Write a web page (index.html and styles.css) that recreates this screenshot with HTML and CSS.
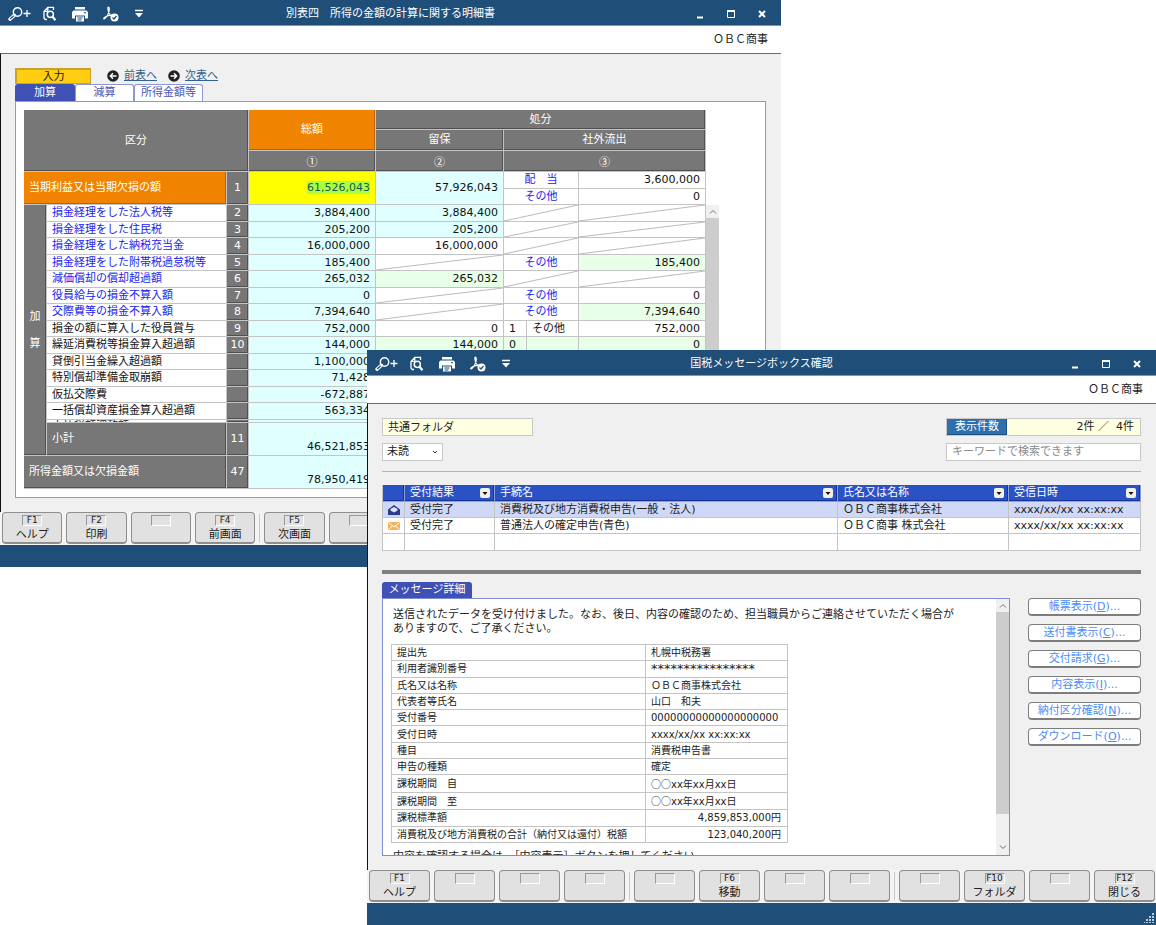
FILE: index.html
```html
<!DOCTYPE html>
<html lang="ja">
<head>
<meta charset="utf-8">
<title>国税メッセージボックス確認</title>
<link rel="stylesheet" href="styles.css">
</head>
<body>
<svg class="sprites" aria-hidden="true">
  <symbol id="i-zoom" viewBox="0 0 23 16">
    <g fill="none" stroke="#fff"><circle cx="9.500" cy="6" r="4.200" stroke-width="1.400"/><path d="M6.300 9.200L2 13.200" stroke-width="3.400" stroke-linecap="round"/><path d="M5.700 9.700L2.200 13" stroke="#1f4e79" stroke-width="1.200"/><path d="M15.500 7.500h7M19 4v7" stroke-width="1.300"/></g>
  </symbol>
  <symbol id="i-preview" viewBox="0 0 14 16">
    <g fill="none" stroke="#fff"><path d="M4 13.500H2.200L1 12V5.500L4.800 1.300H10.500V4M4.800 1.300V5.300H1" stroke-width="1.300"/><circle cx="7.300" cy="8.300" r="3.100" stroke-width="1.500"/><path d="M9.500 10.800L12.500 14.300" stroke-width="2.200"/></g>
  </symbol>
  <symbol id="i-print" viewBox="0 0 16 16">
    <path fill="#fff" d="M3 1h10v2.500H3zM1.500 4.500h13L16 6v6.500h-3V9.500H3v3H0V6z"/><path d="M4 10.500h8V15.500H4z" fill="#fff"/><path d="M5.500 12h5M5.500 14h4" stroke="#1f4e79"/><path d="M12 6.700h2" stroke="#1f4e79"/>
  </symbol>
  <symbol id="i-pdf" viewBox="0 0 16 16">
    <path d="M5.500 1C4.300 1 5 5 6.300 7.500c.9 1.700 2 2.600 3 2.800M5.500 1c1.400.8.900 5-1.200 8.500C3 11.700 1.500 13.300.8 12.800c-.6-.8 2-2.500 4.800-3.200 1.500-.4 3-.5 4-.4" fill="none" stroke="#fff" stroke-width="1.200"/><circle cx="11.500" cy="11.500" r="4" fill="#fff"/><path d="M9.500 11.500l1.500 1.500 2.500-3" fill="none" stroke="#1f4e79" stroke-width="1.200"/>
  </symbol>
  <symbol id="i-more" viewBox="0 0 10 10"><path d="M1 1.500h8" stroke="#fff" stroke-width="1.500"/><path d="M1 4h8L5 8.500z" fill="#fff"/></symbol>
  <symbol id="i-min" viewBox="0 0 10 10"><path d="M2 8.500h6" stroke="#fff" stroke-width="2"/></symbol>
  <symbol id="i-max" viewBox="0 0 10 10"><path d="M1.500 2h7v6.500h-7z" fill="none" stroke="#fff"/><path d="M1 2h8" stroke="#fff" stroke-width="2"/></symbol>
  <symbol id="i-close" viewBox="0 0 10 10"><path d="M2 2l6 6M8 2l-6 6" stroke="#fff" stroke-width="2"/></symbol>
  <symbol id="i-prev" viewBox="0 0 12 12"><circle cx="6" cy="6" r="5.800" fill="#222"/><path d="M9.500 6H3.500M6 3.300L3.300 6 6 8.700" fill="none" stroke="#fff" stroke-width="1.400"/></symbol>
  <symbol id="i-next" viewBox="0 0 12 12"><circle cx="6" cy="6" r="5.800" fill="#222"/><path d="M2.500 6h6M6 3.300L8.700 6 6 8.700" fill="none" stroke="#fff" stroke-width="1.400"/></symbol>
  <symbol id="i-up" viewBox="0 0 8 8"><path d="M1 5.500L4 2.500l3 3" fill="none" stroke="#777"/></symbol>
  <symbol id="i-down" viewBox="0 0 8 8"><path d="M1 2.500l3 3 3-3" fill="none" stroke="#666"/></symbol>
  <symbol id="i-pick" viewBox="0 0 8 8"><path d="M2 3l2 2 2-2" fill="none" stroke="#333"/></symbol>
  <symbol id="i-filter" viewBox="0 0 10 10"><rect width="10" height="10" rx="2" fill="#f3f0e6"/><path d="M2.500 4h5L5 7z" fill="#111"/></symbol>
  <symbol id="i-open" viewBox="0 0 12 12"><path d="M0 5.500L6 1l6 4.500V11H0z" fill="#2b3c90"/><path d="M2.500 5L6 3l3.500 2v1.500L6 8.500 2.500 6.500z" fill="#dfe5fa"/></symbol>
  <symbol id="i-mail" viewBox="0 0 12 12"><path d="M0 2h12v8H0z" fill="#f9b155"/><path d="M.5 2.500L6 7l5.500-4.500M.5 9.500l4-3.500M11.500 9.500l-4-3.500" fill="none" stroke="#fff"/></symbol>
</svg>

<main class="desktop">
<section class="window window-ledger">
  <header class="titlebar">
    <div class="tools">
      <button aria-label="拡大"><svg width="23" height="16"><use href="#i-zoom"/></svg></button>
      <button aria-label="プレビュー"><svg width="14" height="16"><use href="#i-preview"/></svg></button>
      <button aria-label="印刷する"><svg width="16" height="16"><use href="#i-print"/></svg></button>
      <button aria-label="PDF"><svg width="16" height="16"><use href="#i-pdf"/></svg></button>
      <button aria-label="メニュー"><svg width="10" height="10"><use href="#i-more"/></svg></button>
    </div>
    <h1>別表四　所得の金額の計算に関する明細書</h1>
    <div class="controls">
      <button aria-label="最小化"><svg width="10" height="10"><use href="#i-min"/></svg></button>
      <button aria-label="最大化"><svg width="10" height="10"><use href="#i-max"/></svg></button>
      <button aria-label="閉じる"><svg width="10" height="10"><use href="#i-close"/></svg></button>
    </div>
  </header>
  <div class="company">ＯＢＣ商事</div>
  <div class="body">
    <div class="modes">
      <button class="mode">入力</button>
      <svg width="12" height="12"><use href="#i-prev"/></svg><a href="#prev">前表へ</a>
      <svg width="12" height="12"><use href="#i-next"/></svg><a href="#next">次表へ</a>
    </div>
    <nav class="tabs">
      <button class="tab tab-on">加算</button><button class="tab">減算</button><button class="tab tab-wide">所得金額等</button>
    </nav>
    <div class="panel">
      <table class="ledger">
        <colgroup><col class="c-cat"><col class="c-name"><col class="c-no"><col class="c-sum"><col class="c-keep"><col class="c-flag"><col class="c-kind"><col class="c-out"><col class="c-scroll"></colgroup>
        <thead>
          <tr class="h-a"><th colspan="3" rowspan="3">区分</th><th rowspan="2" class="orange">総額</th><th colspan="4">処分</th></tr>
          <tr class="h-b"><th>留保</th><th colspan="3">社外流出</th></tr>
          <tr class="h-b cjk"><th>①</th><th>②</th><th colspan="3">③</th></tr>
        </thead>
        <tbody>
          <tr class="tall"><th colspan="2" rowspan="2" class="orange name">当期利益又は当期欠損の額</th><th rowspan="2">1</th><td rowspan="2" class="focus"><mark>61,526,043</mark></td><td rowspan="2" class="sum">57,926,043</td><td colspan="2" class="kind">配　当</td><td>3,600,000</td></tr>
          <tr><td colspan="2" class="kind">その他</td><td>0</td></tr>
        </tbody>
        <tbody class="rows">
          <tr><th rowspan="15" class="cat">加<br>算</th><td class="item link">損金経理をした法人税等</td><th>2</th><td class="sum">3,884,400</td><td class="sum">3,884,400</td><td colspan="2" class="diag"></td><td class="diag"></td>
            <td rowspan="14" class="bar"><div class="scrollbar"><svg width="8" height="8"><use href="#i-up"/></svg><div class="thumb"></div></div></td></tr>
          <tr><td class="item link">損金経理をした住民税</td><th>3</th><td class="sum">205,200</td><td class="sum">205,200</td><td colspan="2" class="diag"></td><td class="diag"></td></tr>
          <tr><td class="item link">損金経理をした納税充当金</td><th>4</th><td class="sum">16,000,000</td><td>16,000,000</td><td colspan="2" class="diag"></td><td class="diag"></td></tr>
          <tr><td class="item link">損金経理をした附帯税過怠税等</td><th>5</th><td class="sum">185,400</td><td class="diag"></td><td colspan="2" class="kind">その他</td><td class="green">185,400</td></tr>
          <tr><td class="item link">減価償却の償却超過額</td><th>6</th><td class="sum">265,032</td><td class="green">265,032</td><td colspan="2" class="diag"></td><td class="diag"></td></tr>
          <tr><td class="item link">役員給与の損金不算入額</td><th>7</th><td class="sum">0</td><td class="diag"></td><td colspan="2" class="kind">その他</td><td>0</td></tr>
          <tr><td class="item link">交際費等の損金不算入額</td><th>8</th><td class="sum">7,394,640</td><td class="diag"></td><td colspan="2" class="kind">その他</td><td class="green">7,394,640</td></tr>
          <tr><td class="item">損金の額に算入した役員賞与</td><th>9</th><td class="sum">752,000</td><td>0</td><td class="item">1</td><td class="item">その他</td><td>752,000</td></tr>
          <tr><td class="item">繰延消費税等損金算入超過額</td><th>10</th><td class="sum">144,000</td><td class="green">144,000</td><td class="item green">0</td><td class="green"></td><td class="green">0</td></tr>
          <tr><td class="item">貸倒引当金繰入超過額</td><th></th><td class="sum">1,100,000</td><td></td><td></td><td></td><td></td></tr>
          <tr><td class="item">特別償却準備金取崩額</td><th></th><td class="sum">71,428</td><td></td><td></td><td></td><td></td></tr>
          <tr><td class="item">仮払交際費</td><th></th><td class="sum">-672,887</td><td></td><td></td><td></td><td></td></tr>
          <tr><td class="item">一括償却資産損金算入超過額</td><th></th><td class="sum">563,334</td><td></td><td></td><td></td><td></td></tr>
          <tr class="cut"><td class="item"><div>未払税額調整額</div></td><th></th><td class="sum"></td><td></td><td></td><td></td><td></td></tr>
          <tr class="total"><th class="name">小計</th><th>11</th><td class="sum">46,521,853</td><td class="sum"></td><td></td><td></td><td></td></tr>
          <tr class="total"><th colspan="2" class="name">所得金額又は欠損金額</th><th>47</th><td class="sum">78,950,419</td><td class="sum"></td><td></td><td></td><td></td></tr>
        </tbody>
      </table>
    </div>
  </div>
  <div class="fkeys">
    <button><kbd>F1</kbd>ヘルプ</button><button><kbd>F2</kbd>印刷</button><button aria-label="F3"><kbd></kbd></button><button><kbd>F4</kbd>前画面</button><i></i>
    <button><kbd>F5</kbd>次画面</button><button aria-label="F6"><kbd></kbd></button><button aria-label="F7"><kbd></kbd></button><button aria-label="F8"><kbd></kbd></button><i></i>
    <button aria-label="F9"><kbd></kbd></button><button aria-label="F10"><kbd></kbd></button><button aria-label="F11"><kbd></kbd></button><button aria-label="F12"><kbd></kbd></button>
  </div>
  <footer class="status"></footer>
</section>

<section class="window window-message">
  <header class="titlebar">
    <div class="tools">
      <button aria-label="拡大"><svg width="23" height="16"><use href="#i-zoom"/></svg></button>
      <button aria-label="プレビュー"><svg width="14" height="16"><use href="#i-preview"/></svg></button>
      <button aria-label="印刷する"><svg width="16" height="16"><use href="#i-print"/></svg></button>
      <button aria-label="PDF"><svg width="16" height="16"><use href="#i-pdf"/></svg></button>
      <button aria-label="メニュー"><svg width="10" height="10"><use href="#i-more"/></svg></button>
    </div>
    <h1>国税メッセージボックス確認</h1>
    <div class="controls">
      <button aria-label="最小化"><svg width="10" height="10"><use href="#i-min"/></svg></button>
      <button aria-label="最大化"><svg width="10" height="10"><use href="#i-max"/></svg></button>
      <button aria-label="閉じる"><svg width="10" height="10"><use href="#i-close"/></svg></button>
    </div>
  </header>
  <div class="company">ＯＢＣ商事</div>
  <div class="body">
    <div class="filters">
      <input class="folder" aria-label="フォルダ" value="共通フォルダ">
      <div class="count"><b>表示件数</b><span>2件 ／&nbsp; 4件</span></div>
    </div>
    <div class="filters">
      <div class="pick"><select aria-label="状態"><option>未読</option></select><svg width="8" height="8"><use href="#i-pick"/></svg></div>
      <input class="search" aria-label="検索" placeholder="キーワードで検索できます">
    </div>
    <hr class="thin">
    <table class="inbox">
      <colgroup><col class="m-icon"><col class="m-result"><col><col class="m-name"><col class="m-time"></colgroup>
      <thead><tr><th></th>
        <th><div>受付結果<button aria-label="受付結果の絞り込み"><svg width="10" height="10"><use href="#i-filter"/></svg></button></div></th>
        <th><div>手続名<button aria-label="手続名の絞り込み"><svg width="10" height="10"><use href="#i-filter"/></svg></button></div></th>
        <th><div>氏名又は名称<button aria-label="氏名の絞り込み"><svg width="10" height="10"><use href="#i-filter"/></svg></button></div></th>
        <th><div>受信日時<button aria-label="受信日時の絞り込み"><svg width="10" height="10"><use href="#i-filter"/></svg></button></div></th></tr></thead>
      <tbody>
        <tr class="selected"><td><svg width="12" height="12"><use href="#i-open"/></svg></td><td>受付完了</td><td>消費税及び地方消費税申告(一般・法人)</td><td>ＯＢＣ商事株式会社</td><td>xxxx/xx/xx xx:xx:xx</td></tr>
        <tr><td><svg width="12" height="12"><use href="#i-mail"/></svg></td><td>受付完了</td><td>普通法人の確定申告(青色)</td><td>ＯＢＣ商事 株式会社</td><td>xxxx/xx/xx xx:xx:xx</td></tr>
        <tr><td></td><td></td><td></td><td></td><td></td></tr>
      </tbody>
    </table>
    <hr class="thick">
    <h2 class="detail-tab">メッセージ詳細</h2>
    <div class="detail">
      <div class="message">
        <div class="message-text">
          <p>送信されたデータを受け付けました。なお、後日、内容の確認のため、担当職員からご連絡させていただく場合が<br>ありますので、ご了承ください。</p>
          <table class="receipt">
            <tr><th>提出先</th><td>札幌中税務署</td></tr>
            <tr><th>利用者識別番号</th><td class="stars">****************</td></tr>
            <tr><th>氏名又は名称</th><td>ＯＢＣ商事株式会社</td></tr>
            <tr><th>代表者等氏名</th><td>山口　和夫</td></tr>
            <tr><th>受付番号</th><td>00000000000000000000</td></tr>
            <tr><th>受付日時</th><td>xxxx/xx/xx xx:xx:xx</td></tr>
            <tr><th>種目</th><td>消費税申告書</td></tr>
            <tr><th>申告の種類</th><td>確定</td></tr>
            <tr><th>課税期間　自</th><td><span class="cjk">○○</span>xx年xx月xx日</td></tr>
            <tr><th>課税期間　至</th><td><span class="cjk">○○</span>xx年xx月xx日</td></tr>
            <tr><th>課税標準額</th><td class="amount">4,859,853,000円</td></tr>
            <tr><th>消費税及び地方消費税の合計（納付又は還付）税額</th><td class="amount">123,040,200円</td></tr>
          </table>
          <p>内容を確認する場合は、［内容表示］ボタンを押してください。</p>
        </div>
        <div class="scrollbar"><svg width="8" height="8"><use href="#i-up"/></svg><div class="thumb"></div><svg class="end" width="8" height="8"><use href="#i-down"/></svg></div>
      </div>
      <div class="actions">
        <button>帳票表示(<u>D</u>)...</button>
        <button>送付書表示(<u>C</u>)...</button>
        <button>交付請求(<u>G</u>)...</button>
        <button>内容表示(<u>I</u>)...</button>
        <button>納付区分確認(<u>N</u>)...</button>
        <button>ダウンロード(<u>O</u>)...</button>
      </div>
    </div>
  </div>
  <div class="fkeys">
    <button><kbd>F1</kbd>ヘルプ</button><button aria-label="F2"><kbd></kbd></button><button aria-label="F3"><kbd></kbd></button><button aria-label="F4"><kbd></kbd></button><i></i>
    <button aria-label="F5"><kbd></kbd></button><button><kbd>F6</kbd>移動</button><button aria-label="F7"><kbd></kbd></button><button aria-label="F8"><kbd></kbd></button><i></i>
    <button aria-label="F9"><kbd></kbd></button><button><kbd>F10</kbd>フォルダ</button><button aria-label="F11"><kbd></kbd></button><button><kbd>F12</kbd>閉じる</button>
  </div>
  <footer class="status"><svg width="10" height="10" fill="#b9cbe0"><path d="M8 0h2v2H8zM5 3h2v2H5zM8 3h2v2H8zM2 6h2v2H2zM5 6h2v2H5zM8 6h2v2H8zM0 9h1v1H0zM2 9h2v1H2zM5 9h2v1H5zM8 9h2v1H8z"/></svg></footer>
</section>
</main>
</body>
</html>
```
FILE: styles.css
```css
* { box-sizing: border-box; }
body {
  margin: 0;
  background: #fff;
  color: #222;
  font: 11px/14px "DejaVu Sans", "Noto Sans CJK JP", sans-serif;
}
button, input, select { font: inherit; color: inherit; margin: 0; padding: 0; border: 0; background: none; }
h1, h2, p { margin: 0; font-size: 11px; font-weight: normal; }
th, b { font-weight: normal; }
table { border-spacing: 0; table-layout: fixed; }
svg { display: block; flex: none; }
.sprites { position: absolute; width: 0; height: 0; }
.cjk { font-family: "Noto Sans CJK JP", sans-serif; }

/* Desktop and windows */
.desktop { position: relative; min-height: 100vh; overflow: hidden; }
.window { position: absolute; display: flex; flex-direction: column; background: #fff; }
.window-ledger { left: 0; top: 0; right: 375px; }
.window-message { left: 367px; top: 350px; right: 0; bottom: 0; }

.titlebar {
  display: grid;
  grid-template-columns: 1fr auto 1fr;
  align-items: center;
  height: 26px;
  padding: 5px 8px 3px;
  background: #1f4e79;
  border-bottom: 1px solid #6f9cc4;
  color: #fff;
}
.tools { display: flex; align-items: center; gap: 15px; }
.tools button:first-child { margin-right: -3px; }
.controls { display: flex; justify-content: flex-end; gap: 21px; padding-right: 6px; }
.company { height: 27px; padding: 7px 13px 0 0; text-align: right; }
.body {
  flex: 1;
  display: flex;
  flex-direction: column;
  min-height: 0;
  padding: 14px 15px 14px 14px;
  background: #f0f0f0;
  border-top: 1px solid #6d6d6d;
  border-left: 1px solid #111;
}
.status { display: flex; justify-content: flex-end; align-items: flex-end; height: 22px; padding: 2px; background: #1f4e79; }

/* Function key bar */
.fkeys { display: flex; gap: 4px; height: 33px; padding: 0 1px 1px 2px; background: #f4f4f4; }
.fkeys i { width: 1px; margin: 2px 0; background: #c8c8c8; }
.fkeys button {
  flex: 1 1 0;
  display: flex;
  flex-direction: column;
  align-items: center;
  gap: 2px;
  min-width: 0;
  padding-top: 2px;
  border: 1px solid #8f8f8f;
  border-bottom-width: 2px;
  border-radius: 4px;
  background: #e1e1e1;
  white-space: nowrap;
}
.fkeys kbd {
  min-width: 20px;
  height: 11px;
  border: 1px solid #999;
  border-right-color: #fff;
  border-bottom-color: #fff;
  font: 9px/9px "DejaVu Sans", sans-serif;
  text-align: center;
}

/* Scrollbars */
.scrollbar { display: flex; flex-direction: column; align-items: center; width: 13px; height: 100%; padding-top: 3px; background: #f0f0f0; }
.thumb { width: 100%; margin-top: 2px; background: #cdcdcd; }

/* Ledger window */
.modes { display: flex; align-items: center; gap: 5px; height: 16px; }
.mode { width: 76px; height: 16px; margin-right: 11px; line-height: 12px; background: #ffce10; border: 2px solid #c9a22a; border-right-width: 1px; border-bottom-width: 1px; }
.modes a { color: #34618e; }
.modes a + svg { margin-left: 6px; }
.tabs { display: flex; }
.tab { width: 59px; height: 17px; border: 1px solid #8d97d6; border-bottom: 0; border-radius: 3px 3px 0 0; background: #fff; color: #4655b8; line-height: 14px; }
.tab-on { width: 60px; background: #3f51b5; border-color: #3f51b5; color: #fff; }
.tab-wide { width: 69px; }
.panel { padding: 8px; background: #fff; border: 1px solid #8d97d6; }

.ledger { width: 695px; }
.c-cat { width: 23px; }
.c-name { width: 180px; }
.c-no { width: 22px; }
.c-sum { width: 127px; }
.c-keep { width: 128px; }
.c-flag { width: 23px; }
.c-kind { width: 52px; }
.c-out { width: 127px; }
.c-scroll { width: 13px; }
.ledger tr { height: 16px; }
.ledger .h-a { height: 20px; }
.ledger .h-b { height: 21px; }
.ledger tr.tall, .ledger .rows tr:nth-child(odd) { height: 17px; }
.ledger tr.cut.cut { height: 3px; }
.ledger .rows tr.total { height: 33px; }
.ledger th, .ledger td { padding: 0; line-height: 14px; border-right: 1px solid #c4c4c4; border-bottom: 1px solid #c4c4c4; }
.ledger th { background: #777; color: #fff; box-shadow: inset -1px -1px #505050; }
.ledger td { padding-right: 5px; text-align: right; color: #111; }
.ledger .orange { background: #f08300; box-shadow: inset -1px -1px #b86400; }
.ledger .name { padding-left: 5px; text-align: left; }
.ledger .cat { line-height: 27px; }
.ledger .sum { background: #e0ffff; }
.ledger .green { background: #e8ffe8; }
.ledger .focus { background: #ff0; }
.ledger mark { background: #aaff44; color: #1c5a4c; }
.ledger .item { padding: 0 0 0 5px; text-align: left; white-space: nowrap; }
.ledger .link, .ledger .kind { color: #2222ee; }
.ledger .kind { padding: 0; text-align: center; }
.ledger .diag { background: linear-gradient(to top left, transparent calc(50% - 1px), #bbb 50%, transparent calc(50% + 1px)); }
.ledger .total td { padding-bottom: 1px; vertical-align: bottom; }
.ledger .bar { height: 1px; padding: 0; border: 0; }
.ledger .thumb { flex: 1; }
.ledger .cut div { height: 2px; overflow: hidden; }

/* Message window */
.filters { display: flex; justify-content: space-between; margin-bottom: 7px; }
.folder, .search, .pick, .count { height: 18px; border: 1px solid #c8c8c8; background: #fff; }
.folder { width: 151px; padding: 0 0 2px 5px; background: #ffffe1; }
.search { width: 195px; padding: 0 0 2px 5px; }
.search::placeholder { color: #8a8a8a; opacity: 1; }
.count { display: flex; width: 195px; background: #ffffe1; line-height: 15px; }
.count b { width: 60px; background: #2f6fad; color: #fff; text-align: center; box-shadow: inset -1px -1px #1d4f80; }
.count span { flex: 1; padding-right: 6px; text-align: right; }
.pick { position: relative; width: 61px; }
.pick select { appearance: none; width: 100%; height: 100%; padding-left: 4px; }
.pick svg { position: absolute; right: 3px; top: 4px; pointer-events: none; }
hr { width: 100%; margin: 0; border: 0; flex: none; }
.thin { height: 1px; margin: 3px 0 13px; background: #b5b5b5; }
.thick { height: 4px; margin: 19px 0 8px; background: #808080; }

.inbox { width: 100%; background: #fff; border-left: 1px solid #c4c4c4; }
.m-icon { width: 22px; }
.m-result { width: 90px; }
.m-name { width: 171px; }
.m-time { width: 132px; }
.inbox tr { height: 16px; }
.inbox thead tr, .inbox tr:last-child { height: 17px; }
.inbox th, .inbox td { padding: 0 0 0 5px; line-height: 14px; text-align: left; white-space: nowrap; border-right: 1px solid #c4c4c4; border-bottom: 1px solid #c4c4c4; }
.inbox th { background: #2a52c4; color: #fff; border-color: #8fa0d8; box-shadow: inset -1px -1px #16339a; }
.inbox th div { display: flex; justify-content: space-between; align-items: center; padding-right: 4px; }
.inbox .selected td { background: #d0d8f7; }

.detail-tab { width: 90px; height: 16px; padding-top: 1px; border-radius: 3px 3px 0 0; background: #3f51b5; color: #fff; text-align: center; flex: none; }
.detail { flex: 1; display: flex; gap: 18px; min-height: 0; }
.message { flex: 1; display: flex; min-width: 0; overflow: hidden; background: #fff; border: 1px solid #7f8ccd; }
.message-text { flex: 1; min-width: 0; padding: 9px 0 0 8px; white-space: nowrap; }
.message-text p { padding-left: 2px; }
.message .thumb { height: 80%; }
.message .end { margin: auto 0 4px; }
.receipt { width: 397px; height: 199px; margin: 8px 0 7px; border-top: 1px solid #c4c4c4; border-left: 1px solid #c4c4c4; font-size: 10px; line-height: 13px; }
.receipt th, .receipt td { padding: 0 0 0 5px; text-align: left; border-right: 1px solid #c4c4c4; border-bottom: 1px solid #c4c4c4; }
.receipt th { width: 254px; }
.receipt .stars { font-size: 13px; }
.receipt .amount { padding: 0 6px 0 0; text-align: right; }
.actions { display: flex; flex-direction: column; gap: 8px; width: 113px; }
.actions button { height: 18px; border: 1px solid #7d7d7d; border-bottom-width: 2px; border-radius: 4px; background: #fff; color: #4b8df8; line-height: 14px; white-space: nowrap; }
```
